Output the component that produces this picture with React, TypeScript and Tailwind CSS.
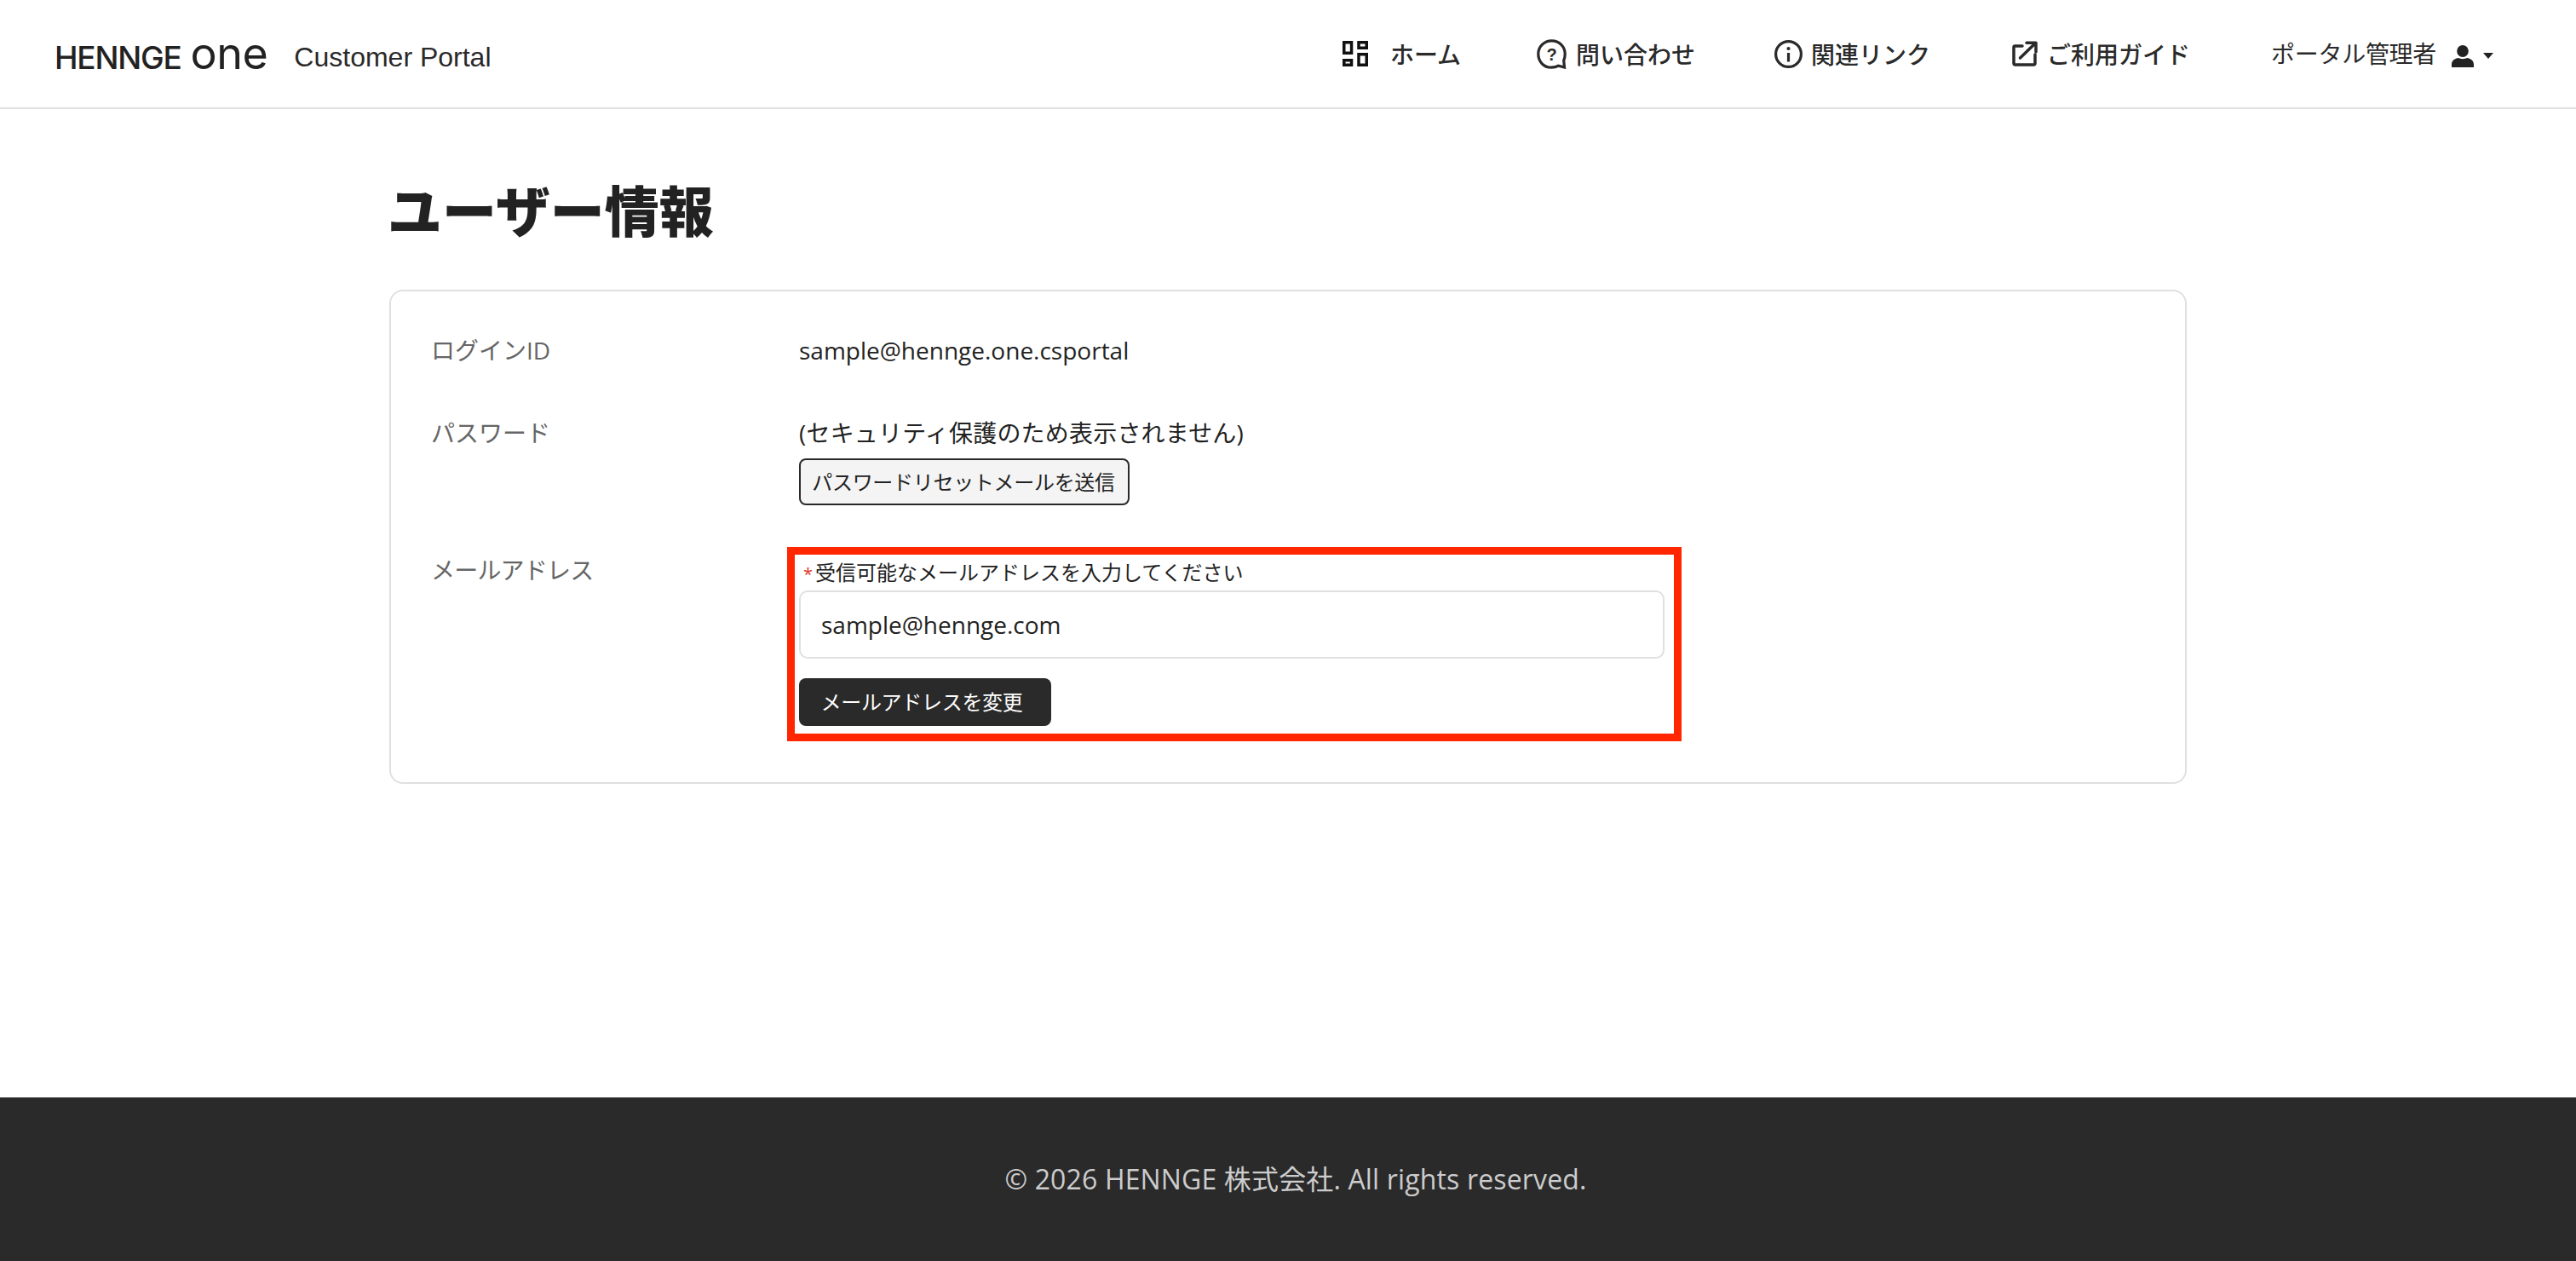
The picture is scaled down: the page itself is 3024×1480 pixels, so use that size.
const jp = "font-['Open_Sans','Noto_Sans_CJK_JP',sans-serif]";

function GridIcon() {
  return (
    <svg viewBox="0 0 30 30" className="h-[30px] w-[30px]" fill="none" stroke="#111" strokeWidth="3.5">
      <rect x="1.75" y="1.75" width="8.8" height="12.5" />
      <rect x="19" y="1.75" width="9.25" height="6.5" />
      <rect x="1.75" y="22.75" width="8.8" height="5.5" />
      <rect x="19" y="15.75" width="9.25" height="12.5" />
    </svg>
  );
}

function HelpIcon() {
  return (
    <svg viewBox="0 0 35 35" className="h-[35px] w-[35px]" fill="none" stroke="#2a2a2a" strokeWidth="3.2">
      <path d="M17 33.200C8 33.200 1.800 26 1.800 17.500S8.500 1.800 17.500 1.800 33.200 8.500 33.200 17.500c0 3-.6 5.500-1.500 7.500l.8 8-7-1.800c-2.500 1.500-5 2-8.500 2z" />
      <text x="17.500" y="24.500" textAnchor="middle" fontSize="20" fontWeight="700" fill="#2a2a2a" stroke="none" fontFamily="Liberation Sans">?</text>
    </svg>
  );
}

function InfoIcon() {
  return (
    <svg viewBox="0 0 33 33" className="h-[33px] w-[33px]" fill="none" stroke="#2a2a2a" strokeWidth="3.2">
      <circle cx="16.500" cy="16.500" r="14.900" />
      <path d="M16.500 15v10.500" />
      <circle cx="16.500" cy="10" r="2.100" fill="#2a2a2a" stroke="none" />
    </svg>
  );
}

function ExternalIcon() {
  return (
    <svg viewBox="0 0 30 30" className="h-[30px] w-[30px]" fill="none" stroke="#2a2a2a" strokeWidth="3.5" strokeLinecap="round" strokeLinejoin="round">
      <path d="M12 6H3.500A1.500 1.500 0 0 0 2 7.500v19A1.500 1.500 0 0 0 3.500 28h22a1.500 1.500 0 0 0 1.500-1.500V16" />
      <path d="M9.500 20 27.500 2.500M17 2.200h11V13" />
    </svg>
  );
}

function UserIcon() {
  return (
    <svg viewBox="0 0 26 26" className="h-[26px] w-[26px]" fill="#222">
      <ellipse cx="13" cy="7" rx="6.800" ry="7" />
      <path d="M0 26v-3.500C0 18 4 15.500 8 15c2 1.500 8 1.500 10 0 4 .5 8 3 8 7.500V26z" />
    </svg>
  );
}

function NavLink({ icon, label, gap }: { icon: React.ReactNode; label: string; gap: string }) {
  return (
    <a className={`flex items-center ${gap} text-[28px] font-medium text-[#2a2a2a]`}>
      {icon}
      <span className="mt-[2px] leading-none">{label}</span>
    </a>
  );
}

export default function App() {
  return (
    <div className={`flex min-h-screen flex-col bg-white text-[#222] ${jp}`}>
      <header className="flex h-[128px] items-center justify-between border-b-2 border-[#e0e0e0] pl-[64px] pr-[97px]">
        <div className="flex items-center">
          <div className="flex items-baseline font-['Inter',sans-serif] text-[#222]">
            <span className="text-[37px] font-medium leading-none tracking-[-1.2px]">HENNGE</span>
            <span className="ml-[11px] text-[52px] leading-none tracking-[-0.5px]">one</span>
          </div>
          <span className="ml-[31px] mt-[7px] font-['Liberation_Sans',sans-serif] text-[32px] text-[#2a2a2a]">Customer Portal</span>
        </div>
        <nav className="flex items-center">
          <NavLink gap="gap-[26px]" icon={<GridIcon />} label="ホーム" />
          <div className="ml-[89px]"><NavLink gap="gap-[11px]" icon={<HelpIcon />} label="問い合わせ" /></div>
          <div className="ml-[93px]"><NavLink gap="gap-[10px]" icon={<InfoIcon />} label="関連リンク" /></div>
          <div className="ml-[96px]"><NavLink gap="gap-[11px]" icon={<ExternalIcon />} label="ご利用ガイド" /></div>
          <div className="ml-[95px] flex items-center">
            <span className="text-[28px] leading-none tracking-[-0.3px] text-[#2a2a2a]">ポータル管理者</span>
            <span className="ml-[18px] mt-[6px]"><UserIcon /></span>
            <span className="ml-[11px] mt-[5px] h-0 w-0 border-x-[6px] border-t-[7px] border-x-transparent border-t-[#222]" />
          </div>
        </nav>
      </header>

      <main className="mx-auto w-[2110px] flex-1">
        <h1 className="-ml-[2px] mt-[82px] text-[64px] font-black leading-[76px] text-[#222]">ユーザー情報</h1>
        <section className="mt-[54px] rounded-[16px] border-2 border-[#e0e0e0] px-[47px] pb-[66px] pt-[48px]">
          <div className="flex">
            <div className="w-[432px] text-[28px] leading-[42px] text-[#666]">ログインID</div>
            <div className="text-[28px] leading-[42px]">sample@hennge.one.csportal</div>
          </div>
          <div className="mt-[55px] flex">
            <div className="w-[432px] text-[28px] leading-[42px] text-[#666]">パスワード</div>
            <div>
              <div className="text-[28px] leading-[42px] tracking-[0.2px]">(セキュリティ保護のため表示されません)</div>
              <button className="mt-[9px] h-[55px] w-[388px] rounded-[8px] border-2 border-[#2a2a2a] bg-[#f4f4f4] pr-[2px] text-[24px] tracking-[-0.3px] text-[#222]">パスワードリセットメールを送信</button>
            </div>
          </div>
          <div className="mt-[57px] flex">
            <div className="-mt-[2px] w-[432px] text-[28px] leading-[42px] tracking-[-0.8px] text-[#666]">メールアドレス</div>
            <div className="relative w-[1016px] pt-[4px]">
              <div className="text-[24px] leading-[36px] text-[#222]"><span className="ml-[5px] text-[20px] text-[#e0301e]">*</span><span className="ml-[3px]">受信可能なメールアドレスを入力してください</span></div>
              <input readOnly value="sample@hennge.com" className="mt-[1px] block h-[80px] w-full rounded-[10px] border-2 border-[#e0e0e0] bg-white px-[24px] text-[28px] text-[#222] outline-none" />
              <button className="mt-[23px] block h-[56px] w-[296px] rounded-[8px] bg-[#2a2a2a] pr-[8px] text-[24px] tracking-[-0.3px] text-white">メールアドレスを変更</button>
              <div className="absolute -bottom-[18px] -left-[14px] -right-[20px] -top-[8px] border-[9px] border-[#ff2600]" />
            </div>
          </div>
        </section>
      </main>

      <footer className="flex h-[192px] items-center justify-center bg-[#2a2a2a] pl-[18px] text-[32px] tracking-[0.15px] text-[#cccccc]">
        © 2026 HENNGE 株式会社. All rights reserved.
      </footer>
    </div>
  );
}
